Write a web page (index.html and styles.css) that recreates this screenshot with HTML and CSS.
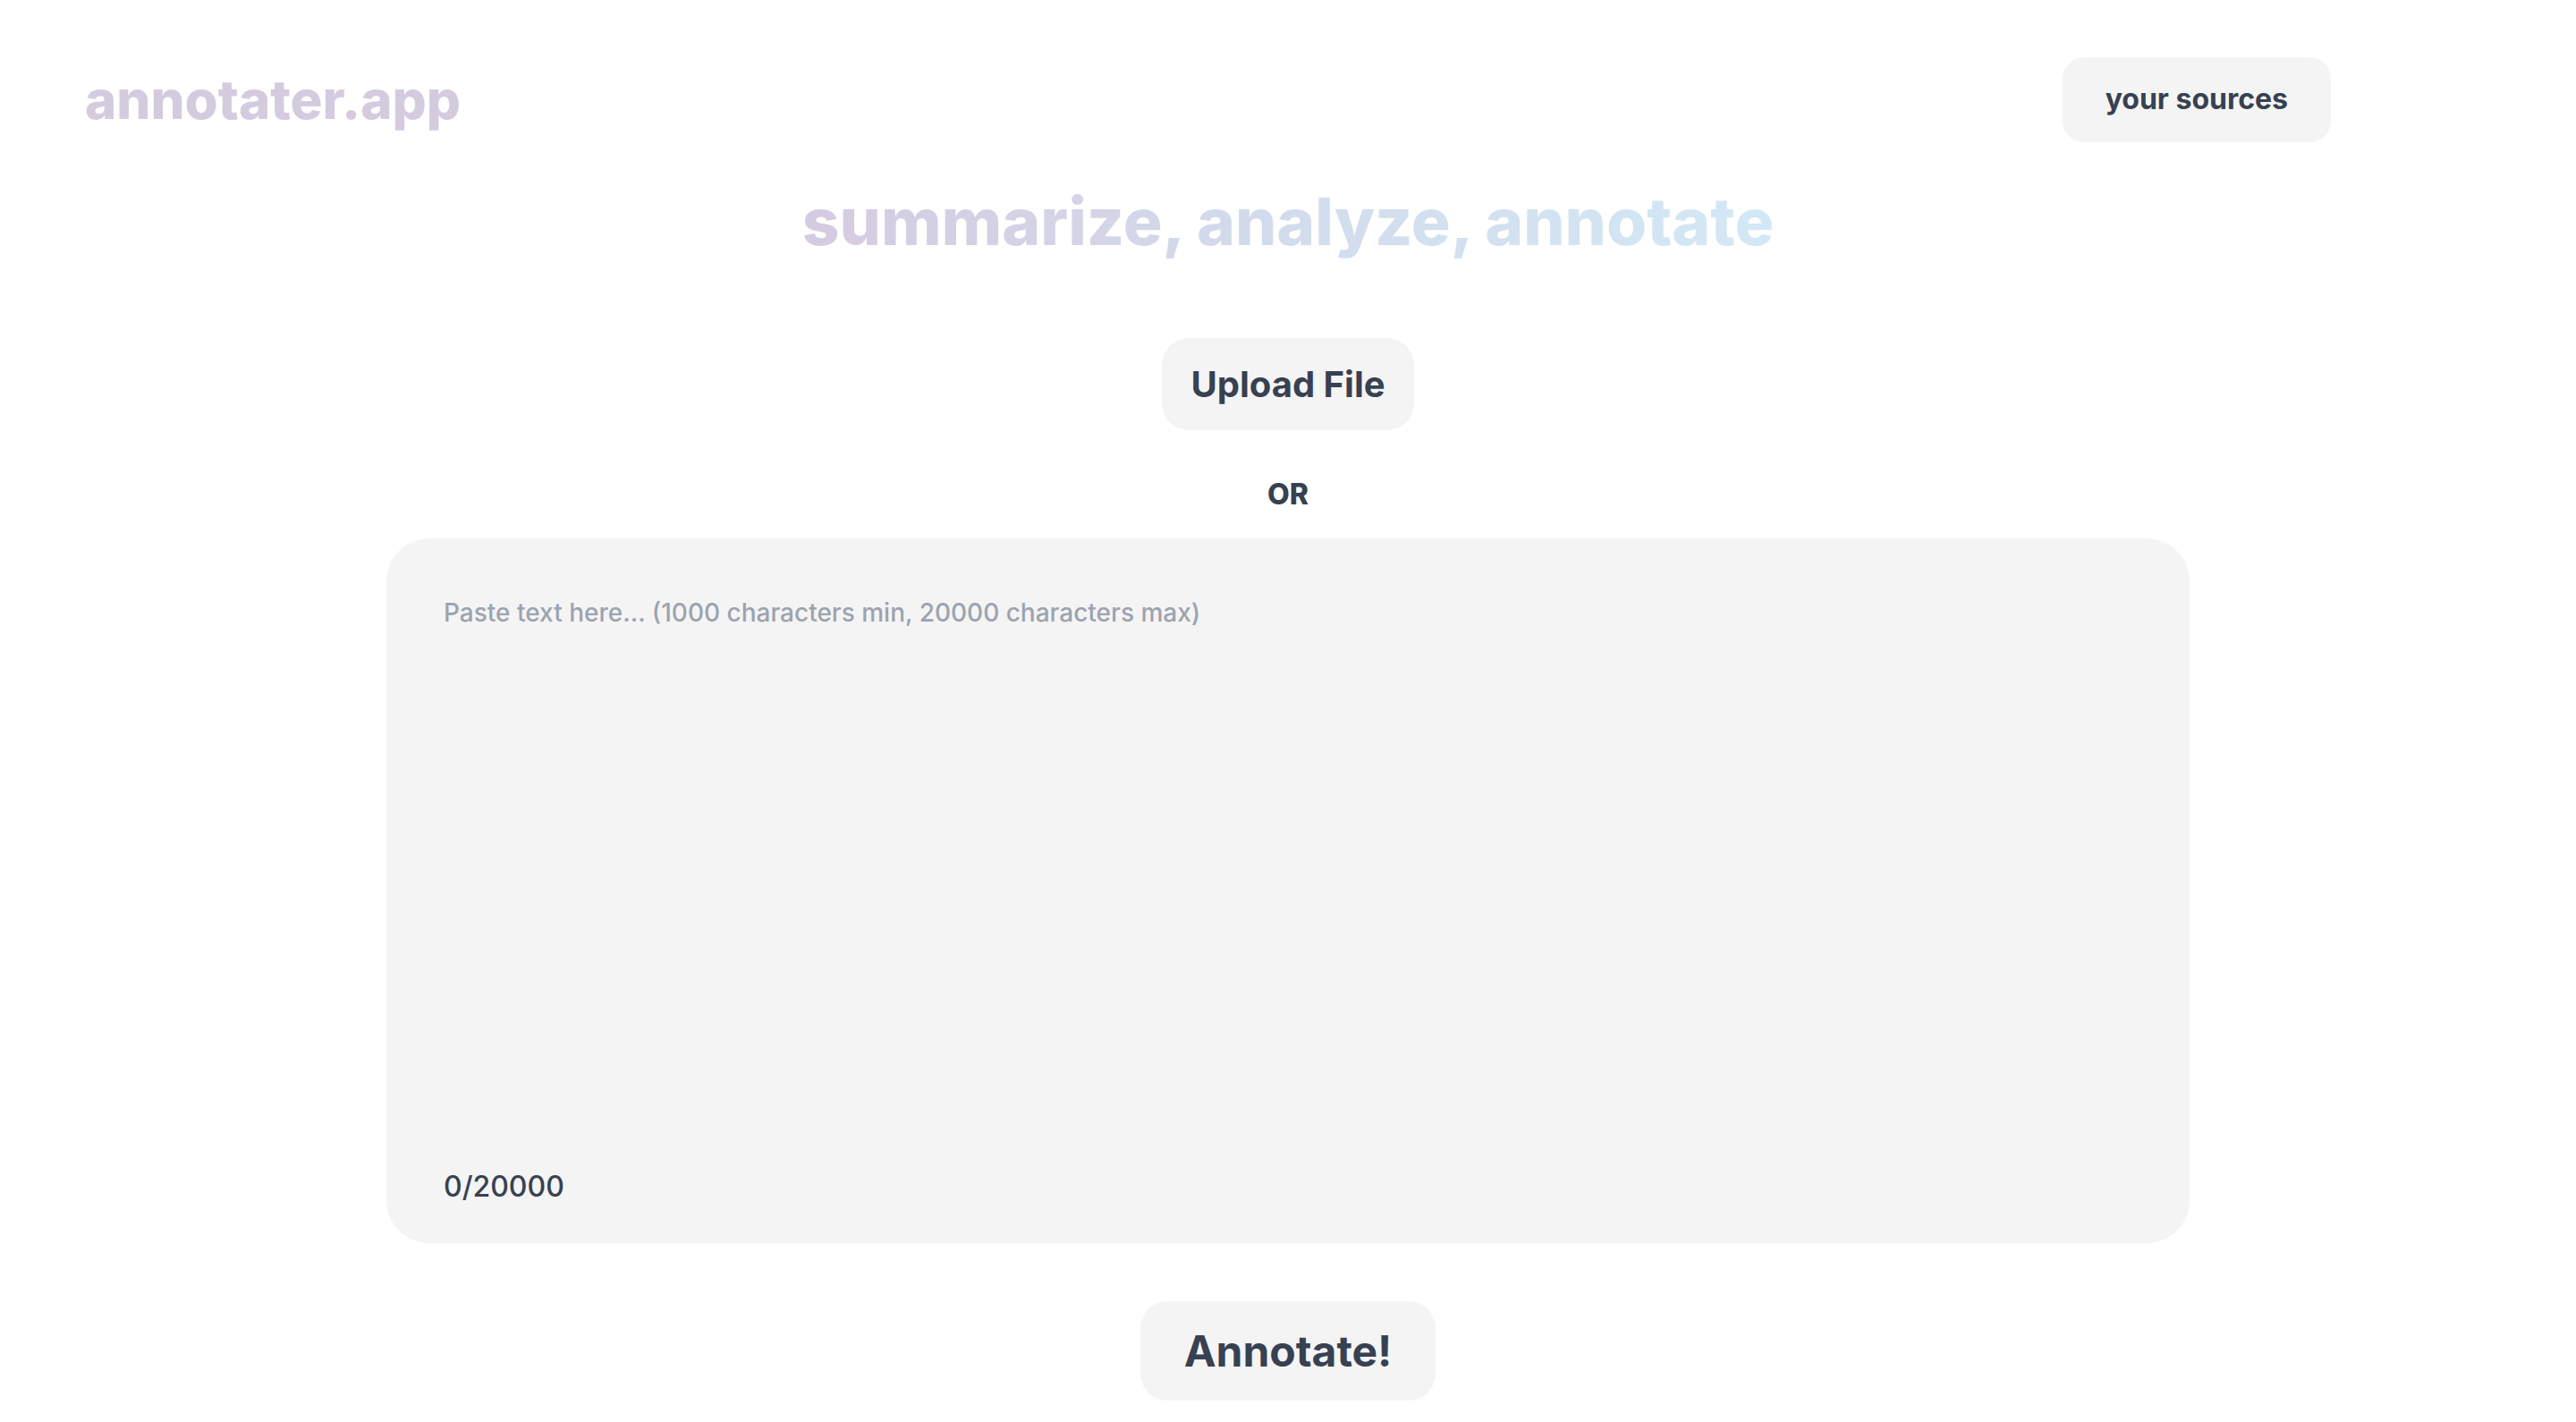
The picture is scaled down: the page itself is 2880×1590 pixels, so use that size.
FILE: index.html
```html
<!DOCTYPE html>
<html lang="en">
<head>
<meta charset="utf-8">
<title>annotater.app</title>
<link rel="stylesheet" href="styles.css">
</head>
<body>
<header class="site-header">
  <div class="logo">annotater.app</div>
  <button class="sources-btn" type="button">your sources</button>
</header>
<main class="main">
  <h1 class="tagline">summarize, analyze, annotate</h1>
  <button class="upload-btn" type="button">Upload File</button>
  <div class="or">OR</div>
  <div class="editor">
    <textarea class="editor-input" placeholder="Paste text here... (1000 characters min, 20000 characters max)"></textarea>
    <div class="counter">0/20000</div>
  </div>
  <button class="annotate-btn" type="button">Annotate!</button>
</main>
</body>
</html>
```

FILE: styles.css
```css
* { box-sizing: border-box; }
html, body { margin: 0; padding: 0; background: #ffffff; }
body {
  font-family: Inter, "Noto Sans", "Liberation Sans", sans-serif;
  color: #374151;
}
button { font-family: inherit; border: none; cursor: pointer; }

.site-header {
  display: flex;
  justify-content: space-between;
  align-items: center;
  padding: 64px 274px 0 95px;
}
.logo {
  font-size: 60px;
  font-weight: 800;
  color: #d4cbdf;
  line-height: 1.21;
}
.sources-btn {
  background: #f4f4f4;
  color: #374151;
  font-size: 32px;
  font-weight: 700;
  line-height: 48px;
  padding: 23px 48px 24px;
  border-radius: 24px;
}

.main {
  display: flex;
  flex-direction: column;
  align-items: center;
}
.tagline {
  margin: 45px 0 0;
  font-size: 73px;
  font-weight: 800;
  line-height: 1.2;
  background: linear-gradient(to right, #d5cbe0 0%, #d2dcec 50%, #d3e8f6 100%);
  -webkit-background-clip: text;
  background-clip: text;
  color: transparent;
}
.upload-btn {
  margin-top: 86px;
  background: #f4f4f4;
  color: #374151;
  font-size: 40px;
  font-weight: 700;
  line-height: 59px;
  padding: 22px 32px;
  border-radius: 30px;
}
.or {
  margin-top: 48px;
  font-size: 32px;
  font-weight: 800;
  line-height: 48px;
}
.editor {
  position: relative;
  margin-top: 25px;
  width: 70%;
  height: 788px;
}
.editor-input {
  display: block;
  width: 100%;
  height: 100%;
  resize: none;
  border: none;
  outline: none;
  background: #f4f4f4;
  border-radius: 48px;
  padding: 62px 64px;
  font-family: inherit;
  font-size: 28px;
  font-weight: 500;
  line-height: 42px;
  color: #374151;
}
.editor-input::placeholder { color: #9ca3af; }
.counter {
  position: absolute;
  left: 64px;
  bottom: 39px;
  font-size: 32px;
  font-weight: 500;
  line-height: 48px;
  color: #374151;
}
.annotate-btn {
  margin-top: 65px;
  background: #f4f4f4;
  color: #374151;
  font-size: 48px;
  font-weight: 700;
  line-height: 75px;
  padding: 18px 49px;
  border-radius: 30px;
}
```
